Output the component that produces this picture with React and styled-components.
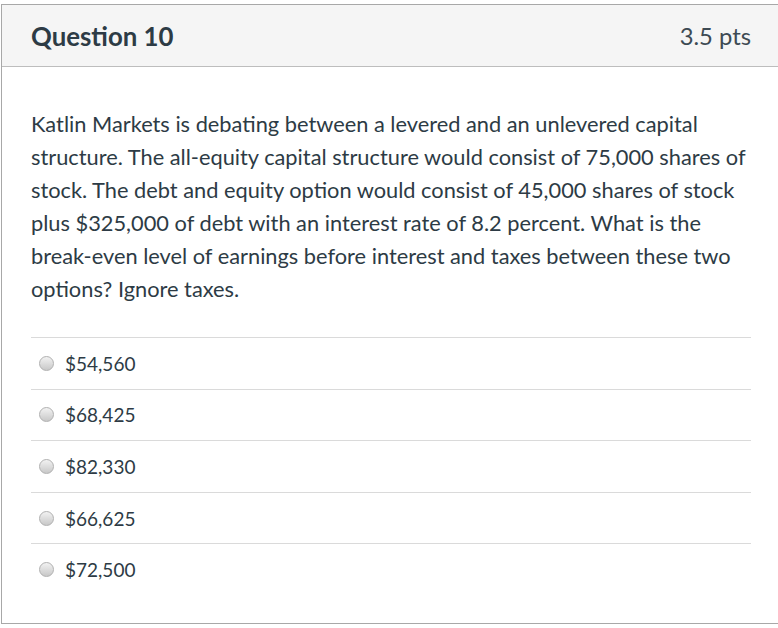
import React from "react";
import styled, { createGlobalStyle } from "styled-components";

const Global = createGlobalStyle`
  body {
    margin: 0;
    overflow: hidden;
    background: #fff;
    font-family: Lato, "Open Sans", sans-serif;
    color: #2d3b45;
  }
`;

const Card = styled.div`
  margin: 4px 0 0 1px;
  width: 790px;
  height: 620px;
  box-sizing: border-box;
  border: 1px solid #a8a8a8;
  border-right: none;
`;

const Header = styled.div`
  height: 62px;
  background: #f5f5f5;
  border-bottom: 1px solid #bdbdbd;
  display: flex;
  align-items: center;
  justify-content: space-between;
  padding: 0 27px 0 29px;
  width: 776px;
  box-sizing: border-box;
`;

const Title = styled.span`
  font-size: 25.8px;
  font-weight: 700;
  color: #2d3b45;
`;

const Points = styled.span`
  font-size: 23.8px;
  color: #3d4a53;
`;

const Body = styled.div`
  padding: 40px 29px 0 29px;
  width: 722px;
`;

const Text = styled.p`
  margin: 0;
  font-size: 21.8px;
  line-height: 33px;
  color: #2d3b45;
`;

const Answers = styled.div`
  margin-top: 32px;
  width: 720px;
`;

const Answer = styled.label`
  display: flex;
  align-items: center;
  height: 50.6px;
  border-top: 1px solid #dadada;
  padding-left: 8px;
  gap: 11px;
  font-size: 19px;
  color: #2d3b45;
`;

const Radio = styled.span`
  width: 15px;
  height: 15px;
  border-radius: 50%;
  border: 1px solid #b0b0b0;
  background: linear-gradient(#f2f2f2, #c8c8c8);
  box-sizing: border-box;
`;

const options = ["$54,560", "$68,425", "$82,330", "$66,625", "$72,500"];

export default function App() {
  return (
    <>
      <Global />
      <Card>
        <Header>
          <Title>Question 10</Title>
          <Points>3.5 pts</Points>
        </Header>
        <Body>
          <Text>
            Katlin Markets is debating between a levered and an unlevered capital
            structure. The all-equity capital structure would consist of 75,000 shares of
            stock. The debt and equity option would consist of 45,000 shares of stock
            plus $325,000 of debt with an interest rate of 8.2 percent. What is the
            break-even level of earnings before interest and taxes between these two
            options? Ignore taxes.
          </Text>
          <Answers>
            {options.map((o) => (
              <Answer key={o}>
                <Radio />
                {o}
              </Answer>
            ))}
          </Answers>
        </Body>
      </Card>
    </>
  );
}
